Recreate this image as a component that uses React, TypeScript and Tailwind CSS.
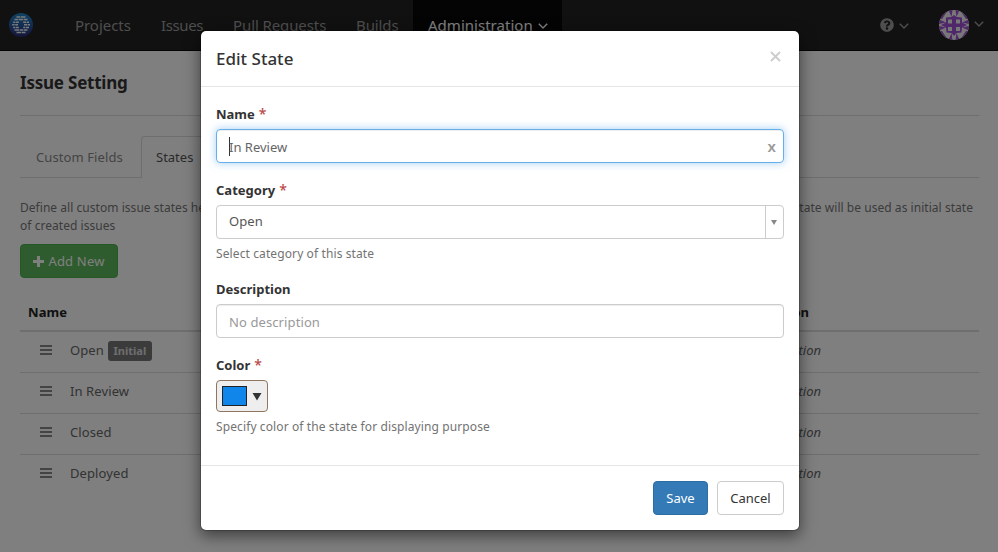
import React from "react";
import { FaQuestionCircle } from "react-icons/fa";

const states = [
  { name: "Open", initial: true },
  { name: "In Review", initial: false },
  { name: "Closed", initial: false },
  { name: "Deployed", initial: false },
];

function Chevron({ className = "" }: { className?: string }) {
  return (
    <svg width="10" height="6" viewBox="0 0 10 6" className={className} fill="none" stroke="currentColor" strokeWidth="1.4">
      <path d="M0.8 0.7 L5 4.9 L9.2 0.7" />
    </svg>
  );
}

function Logo() {
  return (
    <svg width="24" height="24" viewBox="0 0 24 24">
      <defs>
        <linearGradient id="logo-fill" x1="0" y1="0" x2="0" y2="1">
          <stop offset="0" stopColor="#1d86c8" />
          <stop offset="0.5" stopColor="#245ba4" />
          <stop offset="1" stopColor="#2c2a72" />
        </linearGradient>
      </defs>
      <circle cx="12" cy="12" r="12" fill="url(#logo-fill)" />
      <g stroke="#f4f6f8" strokeWidth="1.5">
        <path d="M7.5 4H11M11.6 4H16.5" />
        <path d="M5.5 6.6H9M9.6 6.6H14.4M15 6.6H18.5" />
        <path d="M4.2 9.2H6M6.6 9.2H9.8M14.2 9.2H17M17.6 9.2H20" />
        <path d="M3.2 11.8H5.6M6.2 11.8H9M15 11.8H18.4M19 11.8H21" />
        <path d="M4.2 14.4H6.4M7 14.4H9.8M14.2 14.4H16.2M16.8 14.4H20" />
        <path d="M5.5 17H10M10.6 17H14M14.6 17H18.5" />
        <path d="M7.5 19.6H12.4M13 19.6H16.5" />
      </g>
    </svg>
  );
}

function Avatar() {
  return (
    <svg width="30" height="30" viewBox="0 0 30 30">
      <defs>
        <clipPath id="avatar-round">
          <circle cx="15" cy="15" r="15" />
        </clipPath>
      </defs>
      <g clipPath="url(#avatar-round)">
        <rect width="30" height="30" fill="#f0f0f0" />
        <g fill="#a24fd6">
          <path d="M15 5L17.5 7L23 7.5L23 12.5L28 15L23 17.5L22.5 22.5L17.5 23L15 26L12.5 23L7.5 22.5L7 17.5L2 15L7 12.5L7 7.5L12.5 7Z" />
          <path d="M9.5 0L13.5 0L12.5 7ZM20.5 0L16.5 0L17.5 7ZM9.5 30L13.5 30L12.5 23ZM20.5 30L16.5 30L17.5 23Z" />
          <path d="M0 9.5L0 14L7 12.5ZM0 20.5L0 16L7 17.5ZM30 9.5L30 14L23 12.5ZM30 20.5L30 16L23 17.5Z" />
          <path d="M0 0H9L3 9H0ZM30 0H21L27 9H30ZM0 30H9L3 21H0ZM30 30H21L27 21H30Z" />
        </g>
        <path d="M9 9.5H13V13.5H9ZM17 9.5H21V13.5H17ZM9 17H13V21H9ZM17 17H21V21H17Z" fill="#f0f0f0" />
      </g>
    </svg>
  );
}

function Navbar() {
  return (
    <nav className="flex h-[51px] border-b border-[#080808] bg-[#222] text-[15px] leading-[50px] text-[#9d9d9d]">
      <div className="flex w-[75px] items-center pl-[9px]">
        <Logo />
      </div>
      <span className="w-[86px] tracking-[-0.05px]">Projects</span>
      <span className="w-[72px] tracking-[-0.4px]">Issues</span>
      <span className="w-[123px] tracking-[-0.1px]">Pull Requests</span>
      <span className="w-[57px] tracking-[-0.1px]">Builds</span>
      <span className="flex w-[149px] items-center bg-[#080808] pl-[15px] tracking-[0.02px] text-white">
        Administration
        <Chevron className="ml-[5px] mt-px" />
      </span>
      <div className="ml-auto flex items-center pr-[14px]">
        <FaQuestionCircle size={14} />
        <Chevron className="ml-[5px] mt-px" />
        <div className="ml-[30px]">
          <Avatar />
        </div>
        <Chevron className="ml-[5px] -mt-0.5" />
      </div>
    </nav>
  );
}

function StateTable() {
  return (
    <div className="mt-[15px] text-[13px]">
      <div className="flex h-[39px] items-center border-b-2 border-[#ddd] pl-2 pt-0.5 font-bold text-[#222]">
        <span className="w-[692px] tracking-[0.1px]">Name</span>
        <span className="w-[89px] text-right">Description</span>
      </div>
      {states.map((state, i) => (
        <div
          key={state.name}
          className={`flex items-center pb-[3px] pl-5 text-[#666] ${i === 0 ? "h-[40px]" : "h-[41px] border-t border-[#ddd]"}`}
        >
          <svg width="12" height="10" viewBox="0 0 12 10" className="mb-[2px] mr-[18px] text-[#888]">
            <path d="M0 1H12M0 5H12M0 9H12" stroke="currentColor" strokeWidth="2" />
          </svg>
          <span className="tracking-[0.1px]">{state.name}</span>
          {state.initial && (
            <span className="ml-1 flex h-5 w-11 items-center justify-center rounded-[3px] bg-[#777] pt-px text-[11px] font-bold text-[#ddd]">
              Initial
            </span>
          )}
          <span className="ml-auto mr-[158px] text-right italic">No description</span>
        </div>
      ))}
    </div>
  );
}

function SettingsPage() {
  return (
    <main className="pl-5 pr-[19px]">
      <h1 className="h-[64px] pt-[20px] text-[17px] font-bold leading-6 tracking-[-0.22px] text-[#333]">Issue Setting</h1>
      <hr className="border-[#ddd]" />
      <div className="mt-5 flex h-[42px] text-[13px]">
        <span className="flex w-[121px] items-center border-b border-[#ddd] pl-4 pt-0.5 tracking-[0.1px] text-[#888]">
          Custom Fields
        </span>
        <span className="flex w-[70px] items-center rounded-t border border-b-0 border-[#ddd] pl-[14px] text-[#555]">
          States
        </span>
        <span className="flex-1 border-b border-[#ddd]" />
      </div>
      <div className="mt-[21px] flex h-9 justify-between text-[12px] leading-[18px] text-[#777]">
        <p className="tracking-[0.04px]">
          Define all custom issue states here.
          <br />
          of created issues
        </p>
        <p className="mr-[6px] tracking-[0.04px]">The first state will be used as initial state</p>
      </div>
      <button className="mt-[9px] flex h-[34px] w-[98px] items-center justify-center gap-1 rounded border border-[#4cae4c] bg-[#5cb85c] text-[13px] tracking-[0.2px] text-white">
        <svg width="11" height="11" viewBox="0 0 11 11" fill="currentColor">
          <path d="M4 0H7V4H11V7H7V11H4V7H0V4H4Z" />
        </svg>
        <span className="pt-px">Add New</span>
      </button>
      <StateTable />
    </main>
  );
}

function FieldLabel({ text, required = false }: { text: string; required?: boolean }) {
  return (
    <div className="h-[25px] text-[13px] font-bold leading-5 text-[#333]">
      {text}
      {required && <span className="ml-1 text-[14px] font-medium leading-none text-[#b94a48]">*</span>}
    </div>
  );
}

function EditStateDialog() {
  return (
    <div className="absolute left-[200px] top-[30px] w-[600px] rounded-md border border-black/20 bg-white bg-clip-padding shadow-[0_5px_15px_rgba(0,0,0,0.5)]">
      <header className="flex h-[56px] items-center justify-between border-b border-[#e5e5e5] px-[15px]">
        <h2 className="text-[17px] font-medium text-[#333]">Edit State</h2>
        <svg width="11" height="11" viewBox="0 0 11 11" className="mr-[3px] -mt-1 text-[#ccc]">
          <path d="M1 1L10 10M10 1L1 10" stroke="currentColor" strokeWidth="1.8" />
        </svg>
      </header>
      <div className="h-[378px] px-[15px] pt-[17px] text-[13px]">
        <FieldLabel text="Name" required />
        <div className="flex h-[34px] items-center rounded border border-[#66afe9] pl-3 pr-[7px] text-[#666] shadow-[0_0_8px_rgba(102,175,233,0.6),inset_0_1px_1px_rgba(0,0,0,0.075)]">
          <span className="h-[19px] w-px bg-[#333]" />
          <span className="-ml-px flex-1 pt-[3px]">In Review</span>
          <span className="pt-px text-[15px] font-semibold text-[#999]">x</span>
        </div>
        <div className="mt-[17px]">
          <FieldLabel text="Category" required />
        </div>
        <div className="flex h-[34px] rounded border border-[#ccc] pl-3 text-[#555]">
          <span className="flex-1 leading-[31px] tracking-[0.1px]">Open</span>
          <span className="flex w-[18px] items-center border-l border-[#ccc] pl-[5px] text-[#888]">
            <svg width="6" height="5" viewBox="0 0 6 5">
              <path d="M0 0H6L3 5Z" fill="currentColor" />
            </svg>
          </span>
        </div>
        <p className="mt-[6px] h-[17px] text-[12px] leading-[18px] tracking-[0.11px] text-[#737373]">
          Select category of this state
        </p>
        <div className="mt-[17px]">
          <FieldLabel text="Description" />
        </div>
        <div className="flex h-[34px] items-center rounded border border-[#ccc] pl-3 pt-[3px] tracking-[0.1px] text-[#999] shadow-[inset_0_1px_1px_rgba(0,0,0,0.075)]">
          No description
        </div>
        <div className="mt-[17px]">
          <FieldLabel text="Color" required />
        </div>
        <div className="flex h-8 w-[52px] items-center gap-[5px] rounded border border-[#91765d] bg-[#eee] pl-[5px]">
          <span className="h-5 w-[25px] border border-[#222] bg-[#1186ea]" />
          <svg width="10" height="9" viewBox="0 0 10 9">
            <path d="M0.5 1H9.5L5 8.5Z" fill="#333" />
          </svg>
        </div>
        <p className="mt-[6px] text-[12px] leading-[18px] tracking-[0.11px] text-[#737373]">
          Specify color of the state for displaying purpose
        </p>
      </div>
      <footer className="flex h-[65px] justify-end gap-[9px] border-t border-[#e5e5e5] px-[15px] pt-[15px] text-[13px]">
        <button className="h-[34px] w-[55px] rounded border border-[#2e6da4] bg-[#337ab7] pt-[2px] text-white">Save</button>
        <button className="h-[34px] w-[67px] rounded border border-[#ccc] bg-white pt-[2px] text-[#333]">Cancel</button>
      </footer>
    </div>
  );
}

export default function App() {
  return (
    <div className="relative h-[552px] w-[998px] overflow-hidden bg-white font-['Noto_Sans','Open_Sans',sans-serif]">
      <Navbar />
      <SettingsPage />
      <div className="absolute inset-0 bg-black/50" />
      <EditStateDialog />
    </div>
  );
}
